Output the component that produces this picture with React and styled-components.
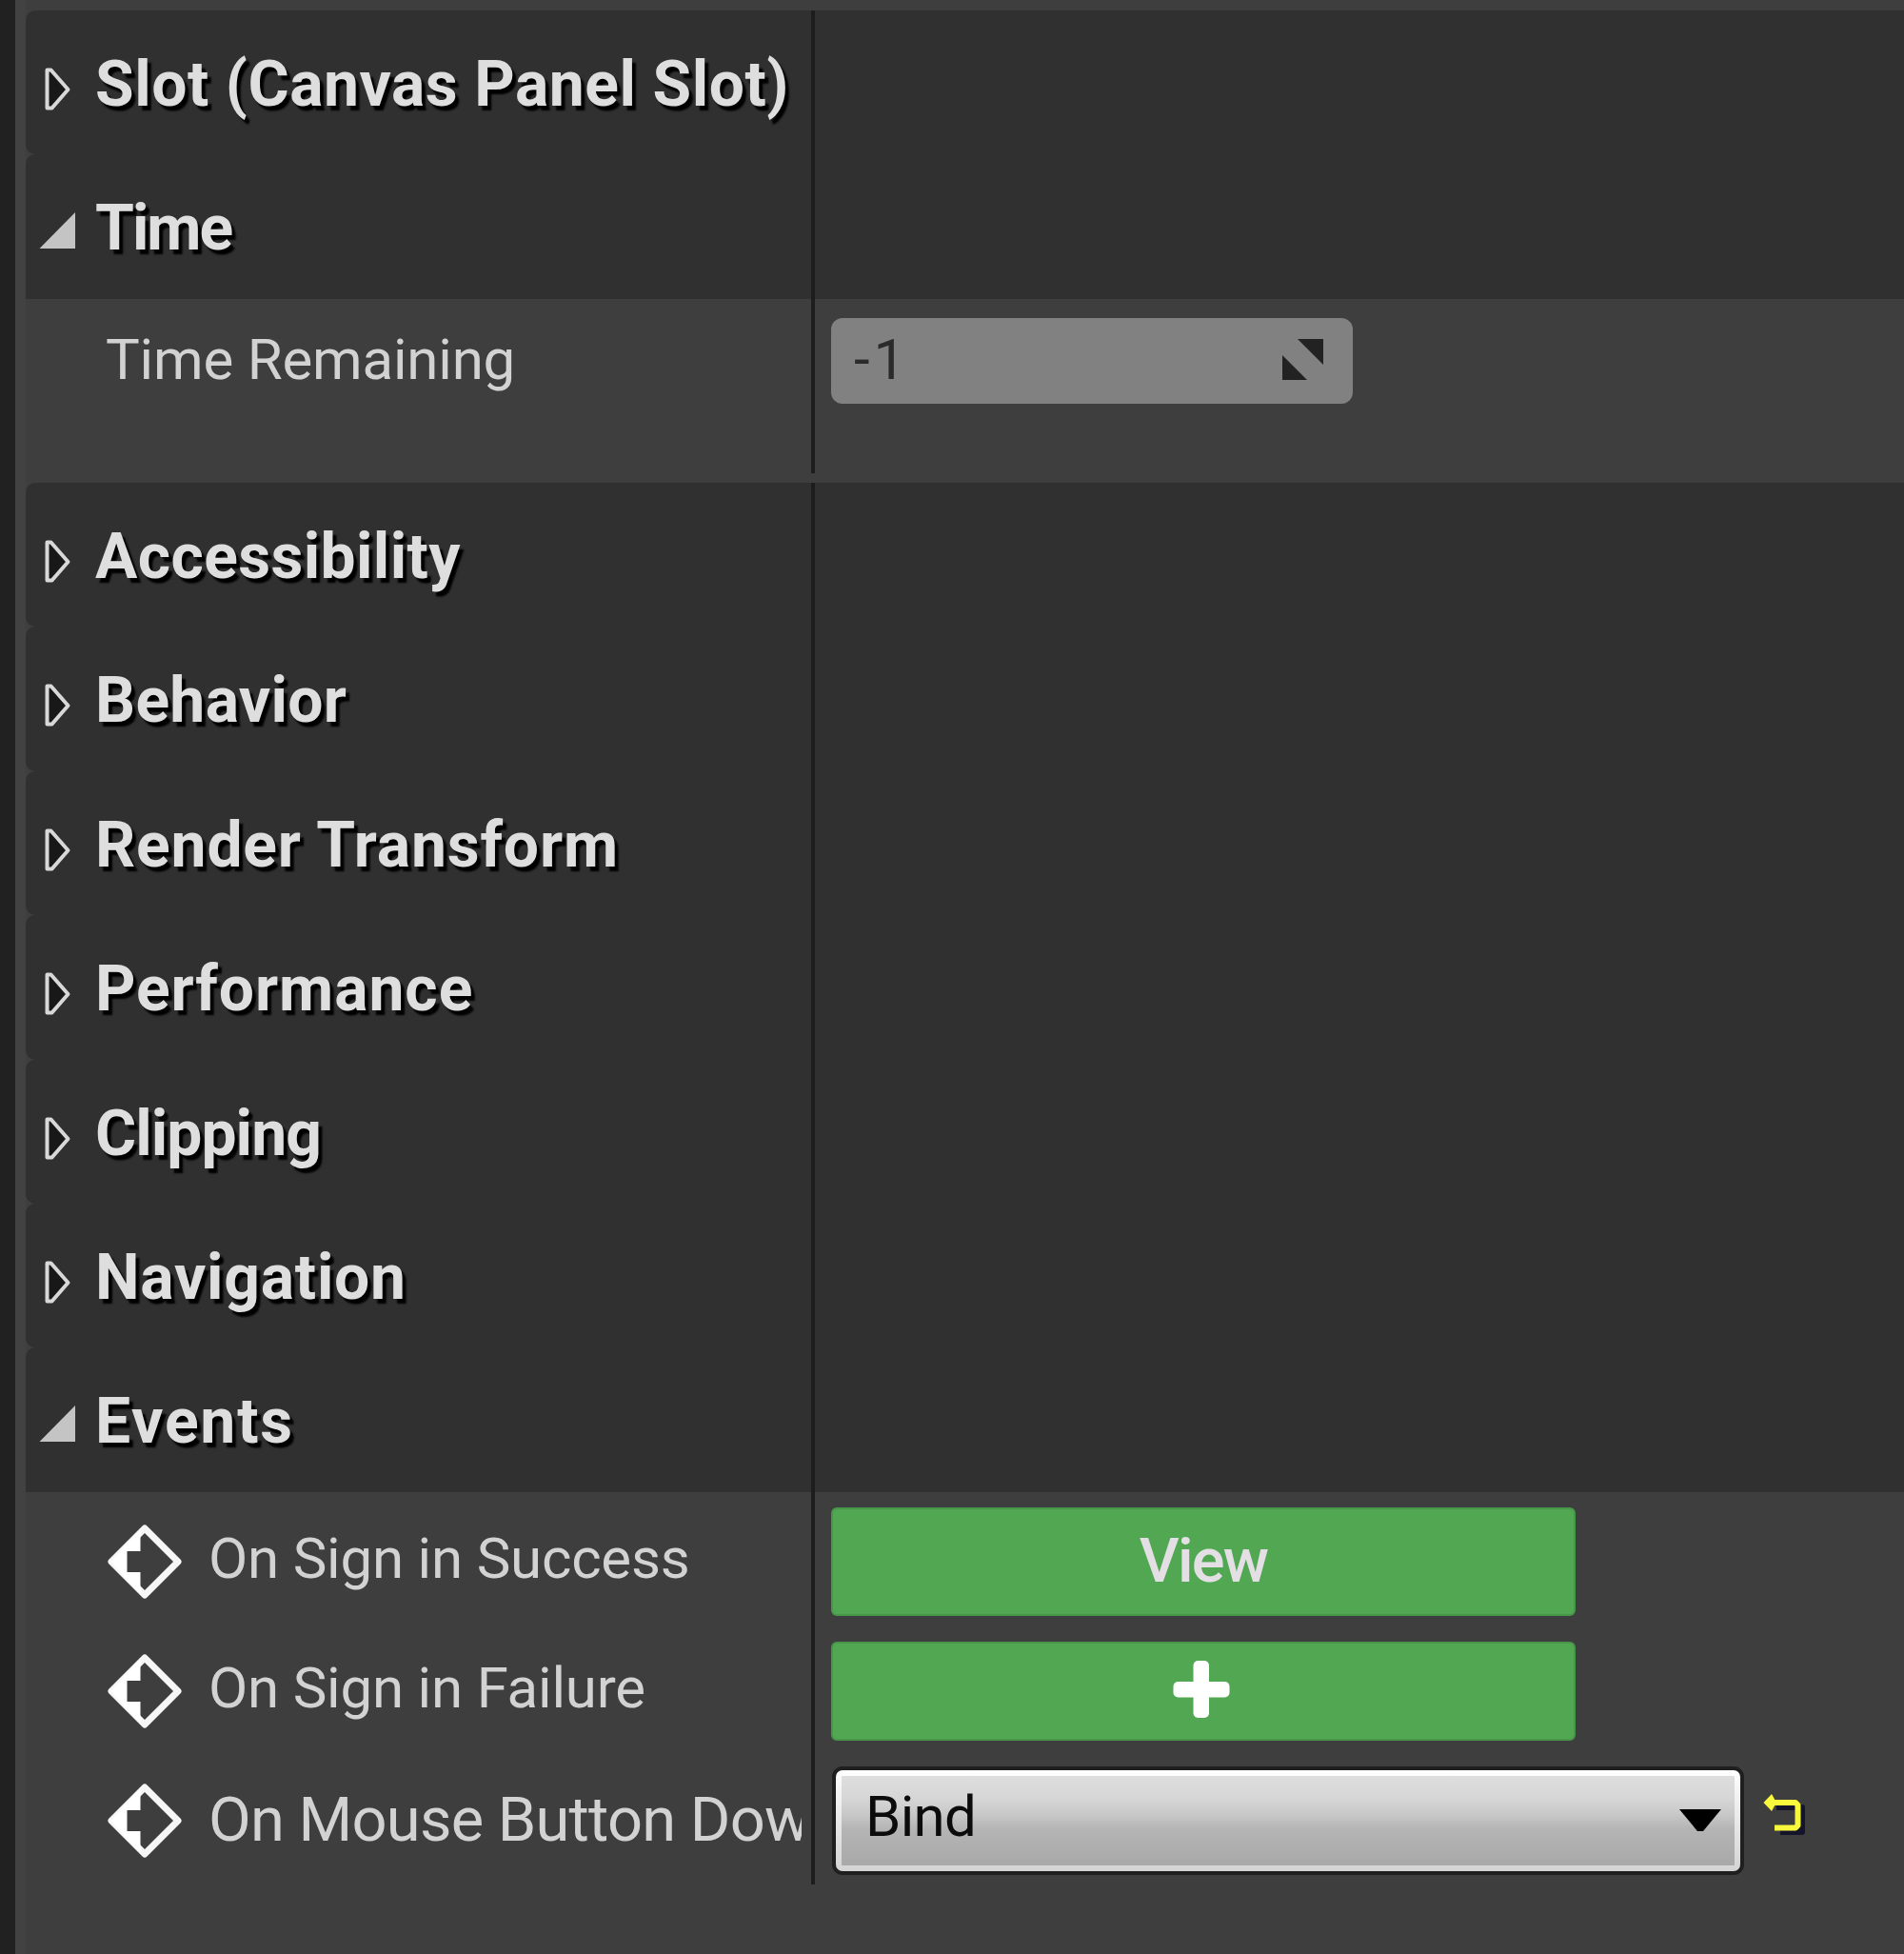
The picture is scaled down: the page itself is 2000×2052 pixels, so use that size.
import React from "react";
import styled, { createGlobalStyle } from "styled-components";

const GlobalStyle = createGlobalStyle`
  * { box-sizing: border-box; }
  body {
    margin: 0;
    background: #3e3e3e;
    font-family: Roboto, "Liberation Sans", sans-serif;
  }
`;

const Window = styled.div`
  display: flex;
  width: 2000px;
  height: 2052px;
  overflow: hidden;
  background: #3e3e3e;
  border-left: 16px solid #212121;
`;

const Details = styled.main`
  flex: 1;
  display: flex;
  flex-direction: column;
  padding: 11px 0 0 11px;
  background: linear-gradient(90deg, #424242 0 10px, #3e3e3e 12px);
`;

const Row = styled.div`
  display: grid;
  grid-template-columns: 829px 1fr;
  flex: none;
  height: ${(p) => p.$height}px;
`;

const HeaderRow = styled(Row)`
  background: #303030;
  border-radius: ${(p) => (p.$open ? "10px 0 0 0" : "10px 0 0 10px")};
`;

const NameCell = styled.div`
  display: flex;
  align-items: center;
  min-width: 0;
  border-right: 4px solid #1d1d1d;
`;

const HeaderName = styled(NameCell)`
  padding: 4px 0 0 14px;
`;

const ArrowSlot = styled.div`
  flex: none;
  width: 59px;
  height: 60px;
`;

const Title = styled.h2`
  margin: 0;
  font-size: 66px;
  font-weight: 700;
  line-height: 80px;
  letter-spacing: ${(p) => p.$tracking}px;
  white-space: pre;
  color: #dedede;
  text-shadow: 4px 5px 2px #000;
`;

const Group = styled.section`
  display: flex;
  flex-direction: column;
  flex: none;
  height: ${(p) => p.$height}px;
  margin-bottom: 10px;
`;

const PropertyName = styled(NameCell)`
  padding-left: ${(p) => p.$indent}px;
  padding-right: 10px;
  padding-top: ${(p) => p.$top || 0}px;
`;

const Label = styled.span`
  flex: 1;
  min-width: 0;
  overflow: hidden;
  padding-bottom: ${(p) => p.$lift}px;
  font-size: ${(p) => p.$size || 60}px;
  line-height: 80px;
  letter-spacing: ${(p) => p.$tracking || 0}px;
  white-space: pre;
  color: #d2d2d2;
`;

const ValueCell = styled.div`
  display: flex;
  align-items: center;
  padding-left: ${(p) => p.$indent || 17}px;
  padding-top: ${(p) => p.$top || 0}px;
  padding-bottom: ${(p) => p.$bottom || 0}px;
`;

const NumberField = styled.div`
  display: flex;
  align-items: center;
  justify-content: space-between;
  width: 548px;
  height: 90px;
  padding: 0 31px 2px 24px;
  border-radius: 12px;
  background: #818181;
  font-size: 60px;
  line-height: 80px;
  letter-spacing: 4px;
  color: #2b2b2b;
`;

const GreenButton = styled.button`
  display: flex;
  align-items: center;
  justify-content: center;
  width: 782px;
  height: ${(p) => p.$height}px;
  padding: 0 0 2px;
  border: 2px solid #47964a;
  border-radius: 6px;
  background: #52a852;
  font: 500 65px/80px Roboto, "Liberation Sans", sans-serif;
  letter-spacing: -1.8px;
  color: #e4dfe4;
`;

const ComboButton = styled.button`
  display: flex;
  align-items: center;
  justify-content: space-between;
  width: 950px;
  height: 106px;
  padding: 0 14px 0 25px;
  border: 6px solid transparent;
  border-radius: 7px;
  background:
    linear-gradient(#dedede 0%, #d6d6d6 25%, #c9c9c9 42%, #b4b4b4 60%, #a9a9a9 100%) padding-box,
    linear-gradient(#ffffff 0%, #f4f4f4 20%, #d4d4d4 100%) border-box;
  box-shadow: 0 0 0 4px #1f1f1f;
  color: #0c0c0c;
`;

const ComboText = styled.span`
  padding-bottom: 7px;
  font: 400 60px/80px Roboto, "Liberation Sans", sans-serif;
  letter-spacing: -0.7px;
`;

const Diamond = styled.svg`
  flex: none;
  width: 84px;
  height: 84px;
  margin-right: 25px;
`;

const ResetIcon = styled.svg`
  flex: none;
  width: 52px;
  height: 52px;
  margin: 0 0 10px 22px;
`;

const Drawing = styled.svg`
  display: block;
  flex: none;
`;

function Expander({ open }) {
  return (
    <ArrowSlot>
      <Drawing width="58" height="60" viewBox="0 0 58 60">
        {open ? (
          <path d="M0.5 51 L38 13 V51 Z" fill="#c4c4c4" />
        ) : (
          <path d="M8.5 14.5 H12.5 L30.5 35 L13.5 54.5 H8.5 Z" fill="#181818" stroke="#d8d8d8" strokeWidth="4" strokeLinejoin="round" />
        )}
      </Drawing>
    </ArrowSlot>
  );
}

function Category({ title, open, tracking, height }) {
  return (
    <HeaderRow $height={height} $open={open}>
      <HeaderName>
        <Expander open={open} />
        <Title $tracking={tracking}>{title}</Title>
      </HeaderName>
    </HeaderRow>
  );
}

function EventIcon() {
  return (
    <Diamond viewBox="-42 -42 84 84">
      <path d="M0 -35 L35 0 L0 35 L-35 0 Z" fill="none" stroke="#f6f6f6" strokeWidth="7" strokeLinejoin="round" />
      <path d="M-4.5 -34 L-36 0 L-4.5 34 V11 H-18.5 V-11 H-4.5 Z" fill="#fff" />
    </Diamond>
  );
}

const lowerCategories = [
  { title: "Accessibility", tracking: 0.36, height: 151 },
  { title: "Behavior", tracking: 0.3, height: 152 },
  { title: "Render Transform", tracking: 0.82, height: 151 },
  { title: "Performance", tracking: 0.92, height: 152 },
  { title: "Clipping", tracking: -0.95, height: 151 },
  { title: "Navigation", tracking: 0.75, height: 151 },
  { title: "Events", tracking: 1.8, height: 152, open: true },
];

export default function App() {
  return (
    <>
      <GlobalStyle />
      <Window>
        <Details>
          <Category title="Slot (Canvas Panel Slot)" tracking={0.54} height={151} />
          <Category title="Time" tracking={-2} height={152} open />
          <Group $height={183}>
            <Row $height={183}>
              <PropertyName $indent={84}>
                <Label $lift={55} $tracking={-0.2}>Time Remaining</Label>
              </PropertyName>
              <ValueCell $bottom={54}>
                <NumberField>
                  <span>-1</span>
                  <Drawing width="43" height="43" viewBox="0 0 43 43">
                    <path d="M16 0 H43 V27 Z M0 17 V43 H26 Z" fill="#222" />
                  </Drawing>
                </NumberField>
              </ValueCell>
            </Row>
          </Group>
          {lowerCategories.map((c) => (
            <Category key={c.title} {...c} />
          ))}
          <Group $height={412}>
            <Row $height={141}>
              <PropertyName $indent={83} $top={5}>
                <EventIcon />
                <Label $lift={7} $tracking={-0.2}>On Sign in Success</Label>
              </PropertyName>
              <ValueCell $top={5}>
                <GreenButton $height={114}>View</GreenButton>
              </ValueCell>
            </Row>
            <Row $height={136}>
              <PropertyName $indent={83}>
                <EventIcon />
                <Label $lift={7} $tracking={-0.2}>On Sign in Failure</Label>
              </PropertyName>
              <ValueCell>
                <GreenButton $height={104}>
                  <Drawing width="64" height="64" viewBox="0 0 64 64">
                    <rect x="21.5" y="1" width="16.5" height="60" rx="5" fill="#fff" />
                    <rect x="0.5" y="23" width="59" height="16.5" rx="5" fill="#fff" />
                  </Drawing>
                </GreenButton>
              </ValueCell>
            </Row>
            <Row $height={135}>
              <PropertyName $indent={83}>
                <EventIcon />
                <Label $lift={2} $size={65} $tracking={-0.75}>On Mouse Button Down</Label>
              </PropertyName>
              <ValueCell $indent={22}>
                <ComboButton>
                  <ComboText>Bind</ComboText>
                  <Drawing width="44" height="24" viewBox="0 0 44 24">
                    <path d="M0 0 H44 L25 23 H19 Z" fill="#000" />
                  </Drawing>
                </ComboButton>
                <ResetIcon viewBox="0 0 52 52">
                  <g fill="none" strokeWidth="6" strokeLinejoin="round">
                    <path d="M16 17 H43 V43 H20" stroke="#14142a" />
                    <path d="M10 12 H36 L38.5 14.5 V36 L36 38.5 H14" stroke="#f8f83c" />
                  </g>
                  <path d="M2.5 12 L11 3 L16 12 L11 21 Z" fill="#f8f83c" />
                </ResetIcon>
              </ValueCell>
            </Row>
          </Group>
        </Details>
      </Window>
    </>
  );
}
